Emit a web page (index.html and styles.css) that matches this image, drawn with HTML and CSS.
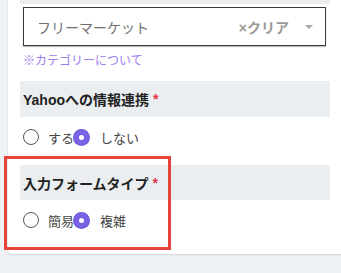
FILE: index.html
```html
<!DOCTYPE html>
<html lang="ja">
<head>
    <meta charset="UTF-8">
    <meta name="viewport" content="width=device-width, initial-scale=1.0">
    <title>出品設定</title>
    <link rel="stylesheet" href="styles.css">
</head>
<body>
    <div class="card">
        <div class="section-head prev"></div>

        <div class="select-box">
            <span class="select-value">フリーマーケット</span>
            <span class="select-clear">×クリア</span>
            <span class="select-arrow"></span>
        </div>
        <a class="help-link" href="#">※カテゴリーについて</a>

        <div class="section-head">Yahooへの情報連携 <span class="req">*</span></div>
        <div class="radio-row">
            <label class="radio"><span class="dot"></span>する</label>
            <label class="radio checked"><span class="dot"></span>しない</label>
        </div>

        <div class="section-head second">入力フォームタイプ <span class="req">*</span></div>
        <div class="radio-row">
            <label class="radio"><span class="dot"></span>簡易</label>
            <label class="radio checked"><span class="dot"></span>複雑</label>
        </div>
    </div>

    <div class="highlight"></div>
</body>
</html>
```

FILE: styles.css
```css
html, body {
    margin: 0;
    padding: 0;
    overflow: hidden;
}
body {
    font-family: "Liberation Sans", "Noto Sans CJK JP", sans-serif;
    background: #eef1f6;
    width: 341px;
    height: 273px;
    position: relative;
}
.card {
    background: white;
    margin: -32px 0 0 8px;
    width: 345px;
    padding: 0 0 14px 12px;
    border-radius: 4px;
    box-shadow: 0 1px 2px rgba(0,0,0,0.12);
    box-sizing: border-box;
}
.section-head {
    width: 310px;
    height: 36px;
    background: #ebeef0;
    box-sizing: border-box;
    padding: 0 3px;
    display: flex;
    align-items: center;
    font-size: 14px;
    font-weight: bold;
    color: #222;
}
.section-head.second {
    height: 35px;
    margin-top: 8px;
}
.req {
    color: #e0364a;
    margin-left: 4px;
}
.select-box {
    margin: 3px 0 0 3px;
    width: 303px;
    height: 39px;
    box-sizing: border-box;
    border: 1px solid #3a3a3a;
    box-shadow: 0 1px 1px rgba(0,0,0,0.25);
    display: flex;
    align-items: center;
    padding: 0 12px 0 13px;
    font-size: 14px;
}
.select-value {
    flex: 1;
    color: #707070;
}
.select-clear {
    color: #9a9a9a;
    font-weight: bold;
}
.select-arrow {
    width: 0;
    height: 0;
    margin-left: 16px;
    border-left: 4px solid transparent;
    border-right: 4px solid transparent;
    border-top: 4px solid #aaa;
}
.help-link {
    display: block;
    margin: 8px 0 12px 3px;
    font-size: 12px;
    line-height: 15px;
    color: #9b7ef0;
    text-decoration: none;
}
.radio-row {
    display: flex;
    align-items: center;
    height: 40px;
    padding-left: 3px;
    font-size: 13px;
    color: #444;
}
.radio {
    display: flex;
    align-items: center;
}
.dot {
    width: 16px;
    height: 16px;
    box-sizing: border-box;
    border: 1px solid #555;
    border-radius: 50%;
    margin-right: 9px;
    background: white;
}
.radio.checked .dot {
    width: 15px;
    height: 15px;
    border: 5px solid #7a62e6;
    box-shadow: 0 0 0 1px #6e5ad6;
    margin-right: 11px;
}
.highlight {
    position: absolute;
    left: 4px;
    top: 156px;
    width: 167px;
    height: 94px;
    box-sizing: border-box;
    border: 3px solid #e5443a;
}
```
